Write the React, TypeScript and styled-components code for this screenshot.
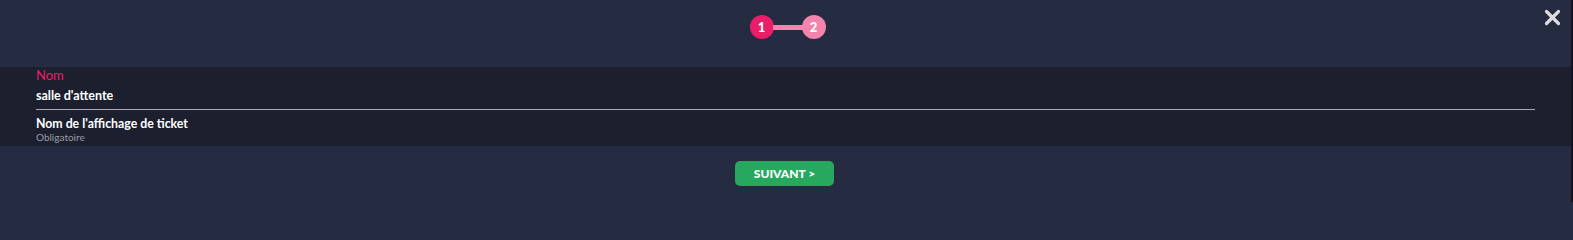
import React from 'react';
import styled, { createGlobalStyle } from 'styled-components';

const GlobalStyle = createGlobalStyle`
  html, body {
    margin: 0;
    padding: 0;
    background: #252b40;
  }
  body {
    font-family: 'Lato', 'Noto Sans', sans-serif;
  }
`;

const Modal = styled.div`
  width: 1573px;
  height: 202px;
  box-sizing: border-box;
  display: flex;
  flex-direction: column;
  background: #252b40;
  border-right: 2px solid #12141d;
`;

const Header = styled.div`
  position: relative;
  height: 67px;
  display: flex;
  justify-content: center;
  padding-top: 15px;
  box-sizing: border-box;
`;

const Stepper = styled.div`
  display: flex;
  align-items: center;
  height: 24px;
  margin-left: 4px;
`;

const Step = styled.div<{ $active?: boolean }>`
  width: 24px;
  height: 24px;
  border-radius: 50%;
  background: ${(p) => (p.$active ? '#ec1d68' : '#f284ae')};
  color: #fff;
  font-size: 13px;
  font-weight: 900;
  display: flex;
  align-items: center;
  justify-content: center;
`;

const Connector = styled.div`
  width: 30px;
  height: 5px;
  margin: 0 -1px;
  background: #f284ae;
`;

const CloseButton = styled.button`
  position: absolute;
  top: 9px;
  right: 10px;
  border: none;
  background: none;
  padding: 0;
  cursor: pointer;
  display: flex;
`;

const FormSection = styled.div`
  height: 79px;
  background: #1b1f2e;
  padding: 1px 36px 0 36px;
  box-sizing: border-box;
`;

const Label = styled.div`
  color: #ec1d68;
  font-size: 13px;
  line-height: 15px;
`;

const Input = styled.input`
  display: block;
  width: 100%;
  box-sizing: border-box;
  border: none;
  border-bottom: 1px solid #a9abb2;
  background: transparent;
  color: #fff;
  font-family: inherit;
  font-size: 12.5px;
  line-height: 15px;
  font-weight: 700;
  padding: 5px 0 6px;
  outline: none;
`;

const HelperTitle = styled.div`
  color: #fff;
  font-size: 12.3px;
  font-weight: 700;
  margin-top: 7px;
  line-height: 14px;
`;

const HelperSub = styled.div`
  color: #9a9ca6;
  font-size: 10px;
  line-height: 13px;
`;

const Footer = styled.div`
  flex: 1;
  display: flex;
  justify-content: center;
  padding-top: 15px;
  box-sizing: border-box;
`;

const NextButton = styled.button`
  width: 99px;
  height: 25px;
  border: none;
  border-radius: 5px;
  background: #27a85f;
  color: #fff;
  font-family: inherit;
  font-size: 12px;
  font-weight: 900;
  cursor: pointer;
  margin-left: -2px;
`;

export default function App() {
  return (
    <>
      <GlobalStyle />
      <Modal>
        <Header>
          <Stepper>
            <Step $active>1</Step>
            <Connector />
            <Step>2</Step>
          </Stepper>
          <CloseButton aria-label="Fermer">
            <svg width="17" height="17" viewBox="0 0 17 17">
              <path d="M2.5 2.5 L14.5 14.5 M14.5 2.5 L2.5 14.5" stroke="#dcdde1" strokeWidth="3.2" strokeLinecap="round" />
            </svg>
          </CloseButton>
        </Header>
        <FormSection>
          <Label>Nom</Label>
          <Input defaultValue="salle d'attente" />
          <HelperTitle>Nom de l'affichage de ticket</HelperTitle>
          <HelperSub>Obligatoire</HelperSub>
        </FormSection>
        <Footer>
          <NextButton>SUIVANT &gt;</NextButton>
        </Footer>
      </Modal>
    </>
  );
}
